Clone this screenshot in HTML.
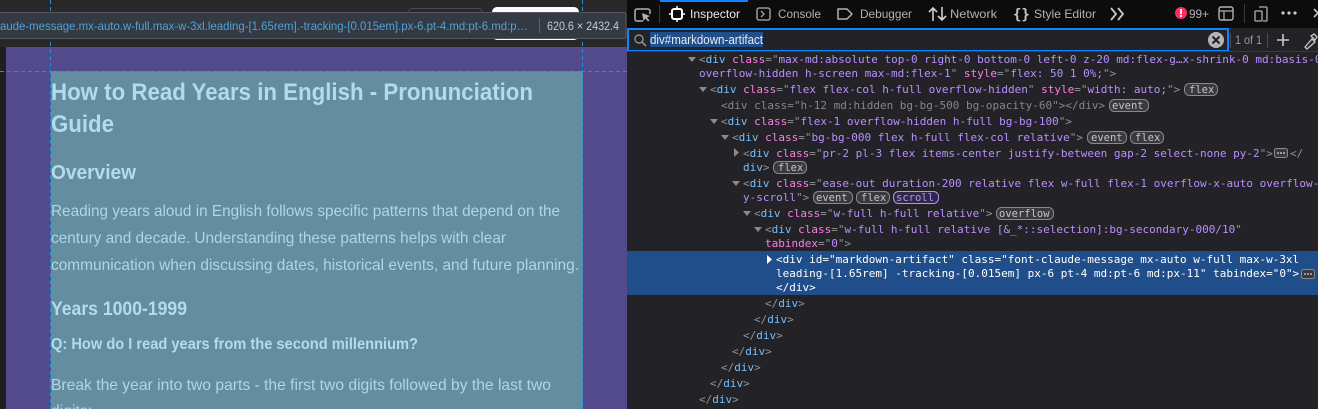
<!DOCTYPE html>
<html><head><meta charset="utf-8"><style>
html,body{margin:0;padding:0;background:#232327;width:1318px;height:409px;overflow:hidden}
svg{display:block}
.m{font-family:"DejaVu Sans Mono",monospace;font-size:11px;fill:#b98eff;white-space:pre}
.t{fill:#75bfff}.a{fill:#ff7de9}.v{fill:#b98eff}.p{fill:#939395}
.g{fill:#8a8a8d}
.w{fill:#fff}
.u{font-family:"Liberation Sans",sans-serif;font-size:12px;fill:#b1b1b3}
.b{font-family:"DejaVu Sans Mono",monospace;font-size:10.5px;fill:#c4c4c6}
.br{fill:#3a3a3e;stroke:#8a8a8d;stroke-width:1}
.h{font-family:"Liberation Sans",sans-serif;font-weight:bold;fill:#b3dbea}
.x{font-family:"Liberation Sans",sans-serif;font-size:16px;fill:#aed6e5}
</style></head><body>
<svg width="1318" height="409" viewBox="0 0 1318 409" xmlns="http://www.w3.org/2000/svg">
<!-- left -->
<rect x="0" y="0" width="627" height="409" fill="#282828"/>
<rect x="0" y="47" width="6" height="362" fill="#1f1f1f"/>
<rect x="6" y="47" width="621" height="362" fill="#534a8c"/>
<rect x="51" y="71" width="532" height="338" fill="#648d9f"/>
<rect x="408.5" y="8.5" width="74" height="12" rx="4" fill="none" stroke="#4a4a4a"/>
<rect x="492" y="7" width="87" height="33" rx="5" fill="#fafafa"/>
<line x1="50.5" y1="0" x2="50.5" y2="409" stroke="#1f8fd6" stroke-dasharray="4 3"/>
<line x1="582.5" y1="0" x2="582.5" y2="409" stroke="#1f8fd6" stroke-dasharray="4 3"/>
<line x1="0" y1="71.5" x2="627" y2="71.5" stroke="#1f8fd6" stroke-dasharray="4 3"/>
<rect x="-2" y="12.5" width="628" height="26" rx="2" fill="#333a44" stroke="#55585c"/>
<text x="0" y="30" font-family="Liberation Sans,sans-serif" font-size="12" fill="#4ea3d8" textLength="528" lengthAdjust="spacingAndGlyphs">aude-message.mx-auto.w-full.max-w-3xl.leading-[1.65rem].-tracking-[0.015em].px-6.pt-4.md:pt-6.md:p…</text>
<line x1="539.5" y1="18" x2="539.5" y2="33" stroke="#5f6368"/>
<text x="547" y="30" font-family="Liberation Sans,sans-serif" font-size="12" fill="#c6c9cc" textLength="72" lengthAdjust="spacingAndGlyphs">620.6 × 2432.4</text>
<text x="51" y="100" class="h" font-size="24" textLength="482" lengthAdjust="spacingAndGlyphs">How to Read Years in English - Pronunciation</text>
<text x="51" y="132" class="h" font-size="24" textLength="63" lengthAdjust="spacingAndGlyphs">Guide</text>
<text x="51" y="179" class="h" font-size="20" textLength="85" lengthAdjust="spacingAndGlyphs">Overview</text>
<text x="51" y="216" class="x" textLength="509" lengthAdjust="spacingAndGlyphs">Reading years aloud in English follows specific patterns that depend on the</text>
<text x="51" y="243" class="x" textLength="455" lengthAdjust="spacingAndGlyphs">century and decade. Understanding these patterns helps with clear</text>
<text x="51" y="270" class="x" textLength="528" lengthAdjust="spacingAndGlyphs">communication when discussing dates, historical events, and future planning.</text>
<text x="51" y="315" class="h" font-size="19" textLength="136" lengthAdjust="spacingAndGlyphs">Years 1000-1999</text>
<text x="51" y="349" class="h" font-size="16" textLength="367" lengthAdjust="spacingAndGlyphs">Q: How do I read years from the second millennium?</text>
<text x="51" y="390" class="x" textLength="500" lengthAdjust="spacingAndGlyphs">Break the year into two parts - the first two digits followed by the last two</text>
<text x="51" y="416" class="x" textLength="41" lengthAdjust="spacingAndGlyphs">digits:</text>

<!-- devtools bg -->
<rect x="627" y="0" width="691" height="409" fill="#232327"/>
<rect x="627" y="0" width="691" height="28" fill="#0c0c0d"/>
<rect x="660" y="0" width="88" height="2" fill="#0a84ff"/>
<!-- toolbar icons -->
<path d="M643 21h-6a2 2 0 0 1-2-2V11a2 2 0 0 1 2-2h11a2 2 0 0 1 2 2v3" fill="none" stroke="#b1b1b3" stroke-width="1.5"/>
<path d="M642 13l8 3-3 1.5 2.5 3-1.5 1-2.5-3-2 2.5z" fill="#b1b1b3"/>
<line x1="659.5" y1="5" x2="659.5" y2="23" stroke="#38383d"/>
<rect x="672" y="9" width="10" height="10" rx="2" fill="none" stroke="#fff" stroke-width="2"/>
<path d="M677 6v3M677 19v3M669 14h3M682 14h3" stroke="#fff" stroke-width="1.5"/>
<text x="690" y="18" class="u" style="fill:#e8e8ea" textLength="50" lengthAdjust="spacingAndGlyphs">Inspector</text>
<rect x="757" y="8" width="13" height="12" rx="2" fill="none" stroke="#b1b1b3" stroke-width="1.3"/>
<path d="M761 11l3 3-3 3" fill="none" stroke="#b1b1b3" stroke-width="1.2"/>
<text x="778" y="18" class="u" textLength="43" lengthAdjust="spacingAndGlyphs">Console</text>
<path d="M838 9h9l5 5-5 5h-9z" fill="none" stroke="#b1b1b3" stroke-width="1.5" stroke-linejoin="round"/>
<text x="860" y="18" class="u" textLength="52" lengthAdjust="spacingAndGlyphs">Debugger</text>
<path d="M933 21V8M929 12l4-4 4 4M942 7v13M938 16l4 4 4-4" fill="none" stroke="#d0d0d2" stroke-width="1.6"/>
<text x="950" y="18" class="u" textLength="47" lengthAdjust="spacingAndGlyphs">Network</text>
<text x="1013" y="19" font-family="DejaVu Sans Mono,monospace" font-size="14" font-weight="bold" fill="#c8c8ca">{}</text>
<text x="1034" y="18" class="u" textLength="62" lengthAdjust="spacingAndGlyphs">Style Editor</text>
<path d="M1111 8l5 6-5 6M1118 8l5 6-5 6" fill="none" stroke="#c8c8ca" stroke-width="1.8"/>
<circle cx="1181" cy="13" r="6" fill="#ff2d5f"/>
<rect x="1180" y="9" width="2" height="5" fill="#fff"/><rect x="1180" y="15" width="2" height="2" fill="#fff"/>
<text x="1189" y="18" class="u" textLength="20" lengthAdjust="spacingAndGlyphs">99+</text>
<rect x="1219" y="7" width="14" height="13" rx="2" fill="none" stroke="#b1b1b3" stroke-width="1.4"/>
<path d="M1219 11h14M1224 11v9" stroke="#b1b1b3" stroke-width="1.2"/>
<line x1="1244.5" y1="4" x2="1244.5" y2="23" stroke="#38383d"/>
<rect x="1255" y="11" width="7" height="10" rx="1" fill="none" stroke="#b1b1b3" stroke-width="1.3"/>
<path d="M1259 7h7a1 1 0 0 1 1 1v12a1 1 0 0 1-1 1h-3" fill="none" stroke="#b1b1b3" stroke-width="1.3"/>
<circle cx="1283" cy="13" r="1.6" fill="#c8c8ca"/><circle cx="1289" cy="13" r="1.6" fill="#c8c8ca"/><circle cx="1295" cy="13" r="1.6" fill="#c8c8ca"/>
<path d="M1314 9l8 8M1322 9l-8 8" stroke="#c8c8ca" stroke-width="1.6"/>
<!-- search row -->
<rect x="628" y="29" width="600" height="22" fill="#232327" stroke="#0a84ff" stroke-width="2"/>
<rect x="627" y="51" width="691" height="1" fill="#38383d"/>
<circle cx="639" cy="39" r="4" fill="none" stroke="#8f8f92" stroke-width="1.4"/>
<path d="M642 42l4 4" stroke="#8f8f92" stroke-width="1.6"/>
<rect x="650" y="32" width="113" height="15" fill="#204e8a"/>
<text x="650" y="44" font-family="Liberation Sans,sans-serif" font-size="12.5" fill="#e8ecf2" textLength="113" lengthAdjust="spacingAndGlyphs">div#markdown-artifact</text>
<circle cx="1216" cy="40" r="8" fill="#b5b5b7"/>
<path d="M1212.5 36.500l7 7M1219.500 36.500l-7 7" stroke="#232327" stroke-width="2"/>
<line x1="1230.500" y1="33" x2="1230.500" y2="48" stroke="#4a4a4f"/>
<text x="1235" y="44" class="u" style="fill:#9a9a9d" textLength="27" lengthAdjust="spacingAndGlyphs">1 of 1</text>
<line x1="1267.500" y1="33" x2="1267.500" y2="48" stroke="#4a4a4f"/>
<path d="M1277 40h12M1283 34v12" stroke="#c8c8ca" stroke-width="1.6"/>
<path d="M1305 47l7-8 3 3-8 7zM1311 36l3-2 3 3-2 3z" fill="none" stroke="#c8c8ca" stroke-width="1.3"/>
<rect x="627" y="251" width="691" height="44" fill="#204e8a"/>

<!-- arrows -->
<g fill="#8a8a8d">
<path d="M688 57h8l-4 5z"/><path d="M699 87h8l-4 5z"/><path d="M710 119h8l-4 5z"/><path d="M721 135h8l-4 5z"/>
<path d="M734 148v9l5-4.500z"/><path d="M732 181h8l-4 5z"/><path d="M743 211h8l-4 5z"/><path d="M754 227h8l-4 5z"/>
</g>
<path d="M767 255v9l5-4.500z" fill="#fff"/>

<!-- markup -->
<text class="m" x="699" y="63"><tspan class="p">&lt;</tspan><tspan class="t">div</tspan> <tspan class="a">class</tspan><tspan class="p">="</tspan>max-md:absolute top-0 right-0 bottom-0 left-0 z-20 md:flex-g…x-shrink-0 md:basis-0</text>
<text class="m" x="699" y="77">overflow-hidden h-screen max-md:flex-1<tspan class="p">"</tspan> <tspan class="a">style</tspan><tspan class="p">="</tspan>flex: 50 1 0%;<tspan class="p">"&gt;</tspan></text>
<text class="m" x="710" y="93"><tspan class="p">&lt;</tspan><tspan class="t">div</tspan> <tspan class="a">class</tspan><tspan class="p">="</tspan>flex flex-col h-full overflow-hidden<tspan class="p">"</tspan> <tspan class="a">style</tspan><tspan class="p">="</tspan>width: auto;<tspan class="p">"&gt;</tspan></text>
<text class="m g" x="721" y="109" style="fill:#87878a">&lt;div class="h-12 md:hidden bg-bg-500 bg-opacity-60"&gt;&lt;/div&gt;</text>
<text class="m" x="721" y="125"><tspan class="p">&lt;</tspan><tspan class="t">div</tspan> <tspan class="a">class</tspan><tspan class="p">="</tspan>flex-1 overflow-hidden h-full bg-bg-100<tspan class="p">"&gt;</tspan></text>
<text class="m" x="732" y="141"><tspan class="p">&lt;</tspan><tspan class="t">div</tspan> <tspan class="a">class</tspan><tspan class="p">="</tspan>bg-bg-000 flex h-full flex-col relative<tspan class="p">"&gt;</tspan></text>
<text class="m" x="743" y="157"><tspan class="p">&lt;</tspan><tspan class="t">div</tspan> <tspan class="a">class</tspan><tspan class="p">="</tspan>pr-2 pl-3 flex items-center justify-between gap-2 select-none py-2<tspan class="p">"&gt;</tspan></text>
<text class="m p" x="1290" y="157">&lt;/</text>
<text class="m" x="743" y="171"><tspan class="t">div</tspan><tspan class="p">&gt;</tspan></text>
<text class="m" x="743" y="187"><tspan class="p">&lt;</tspan><tspan class="t">div</tspan> <tspan class="a">class</tspan><tspan class="p">="</tspan>ease-out duration-200 relative flex w-full flex-1 overflow-x-auto overflow-</text>
<text class="m" x="743" y="201">y-scroll<tspan class="p">"&gt;</tspan></text>
<text class="m" x="754" y="217"><tspan class="p">&lt;</tspan><tspan class="t">div</tspan> <tspan class="a">class</tspan><tspan class="p">="</tspan>w-full h-full relative<tspan class="p">"&gt;</tspan></text>
<text class="m" x="765" y="233"><tspan class="p">&lt;</tspan><tspan class="t">div</tspan> <tspan class="a">class</tspan><tspan class="p">="</tspan>w-full h-full relative [&amp;_*::selection]:bg-secondary-000/10<tspan class="p">"</tspan></text>
<text class="m" x="765" y="247"><tspan class="a">tabindex</tspan><tspan class="p">="</tspan>0<tspan class="p">"&gt;</tspan></text>
<text class="m w" x="776" y="263" style="fill:#fff">&lt;div id="markdown-artifact" class="font-claude-message mx-auto w-full max-w-3xl</text>
<text class="m w" x="776" y="277" style="fill:#fff">leading-[1.65rem] -tracking-[0.015em] px-6 pt-4 md:pt-6 md:px-11" tabindex="0"&gt;</text>
<text class="m w" x="776" y="291" style="fill:#fff">&lt;/div&gt;</text>
<g class="m">
<text x="765" y="307"><tspan class="p">&lt;/</tspan><tspan class="t">div</tspan><tspan class="p">&gt;</tspan></text>
<text x="754" y="323"><tspan class="p">&lt;/</tspan><tspan class="t">div</tspan><tspan class="p">&gt;</tspan></text>
<text x="743" y="339"><tspan class="p">&lt;/</tspan><tspan class="t">div</tspan><tspan class="p">&gt;</tspan></text>
<text x="732" y="355"><tspan class="p">&lt;/</tspan><tspan class="t">div</tspan><tspan class="p">&gt;</tspan></text>
<text x="721" y="371"><tspan class="p">&lt;/</tspan><tspan class="t">div</tspan><tspan class="p">&gt;</tspan></text>
<text x="710" y="387"><tspan class="p">&lt;/</tspan><tspan class="t">div</tspan><tspan class="p">&gt;</tspan></text>
<text x="699" y="403"><tspan class="p">&lt;/</tspan><tspan class="t">div</tspan><tspan class="p">&gt;</tspan></text>
</g>

<!-- badges -->
<rect class="br" x="1184.500" y="83.500" width="33" height="12" rx="5"/><text class="b" x="1189" y="93">flex</text>
<rect class="br" x="1109.500" y="99.500" width="39" height="12" rx="5"/><text class="b" x="1112" y="109">event</text>
<rect class="br" x="1087.500" y="131.500" width="39" height="12" rx="5"/><text class="b" x="1091" y="141">event</text>
<rect class="br" x="1130.500" y="131.500" width="33" height="12" rx="5"/><text class="b" x="1135" y="141">flex</text>
<rect class="br" x="1274.500" y="148.500" width="13" height="9" rx="2"/><circle cx="1278" cy="153" r="0.900" fill="#ddd"/><circle cx="1281" cy="153" r="0.900" fill="#ddd"/><circle cx="1284" cy="153" r="0.900" fill="#ddd"/>
<rect class="br" x="773.500" y="161.500" width="33" height="12" rx="5"/><text class="b" x="778" y="171">flex</text>
<rect class="br" x="813.500" y="191.500" width="39" height="12" rx="5"/><text class="b" x="816" y="201">event</text>
<rect class="br" x="856.500" y="191.500" width="33" height="12" rx="5"/><text class="b" x="861" y="201">flex</text>
<rect x="893.500" y="191.500" width="45" height="12" rx="5" fill="#2e2a45" stroke="#b98eff"/><text class="b" x="896" y="201" style="fill:#b98eff">scroll</text>
<rect class="br" x="996.500" y="207.500" width="57" height="12" rx="5"/><text class="b" x="999" y="217">overflow</text>
<rect class="br" x="1301.500" y="269.500" width="13" height="9" rx="2"/><circle cx="1305" cy="274" r="0.900" fill="#ddd"/><circle cx="1308" cy="274" r="0.900" fill="#ddd"/><circle cx="1311" cy="274" r="0.900" fill="#ddd"/>
</svg>
</body></html>
